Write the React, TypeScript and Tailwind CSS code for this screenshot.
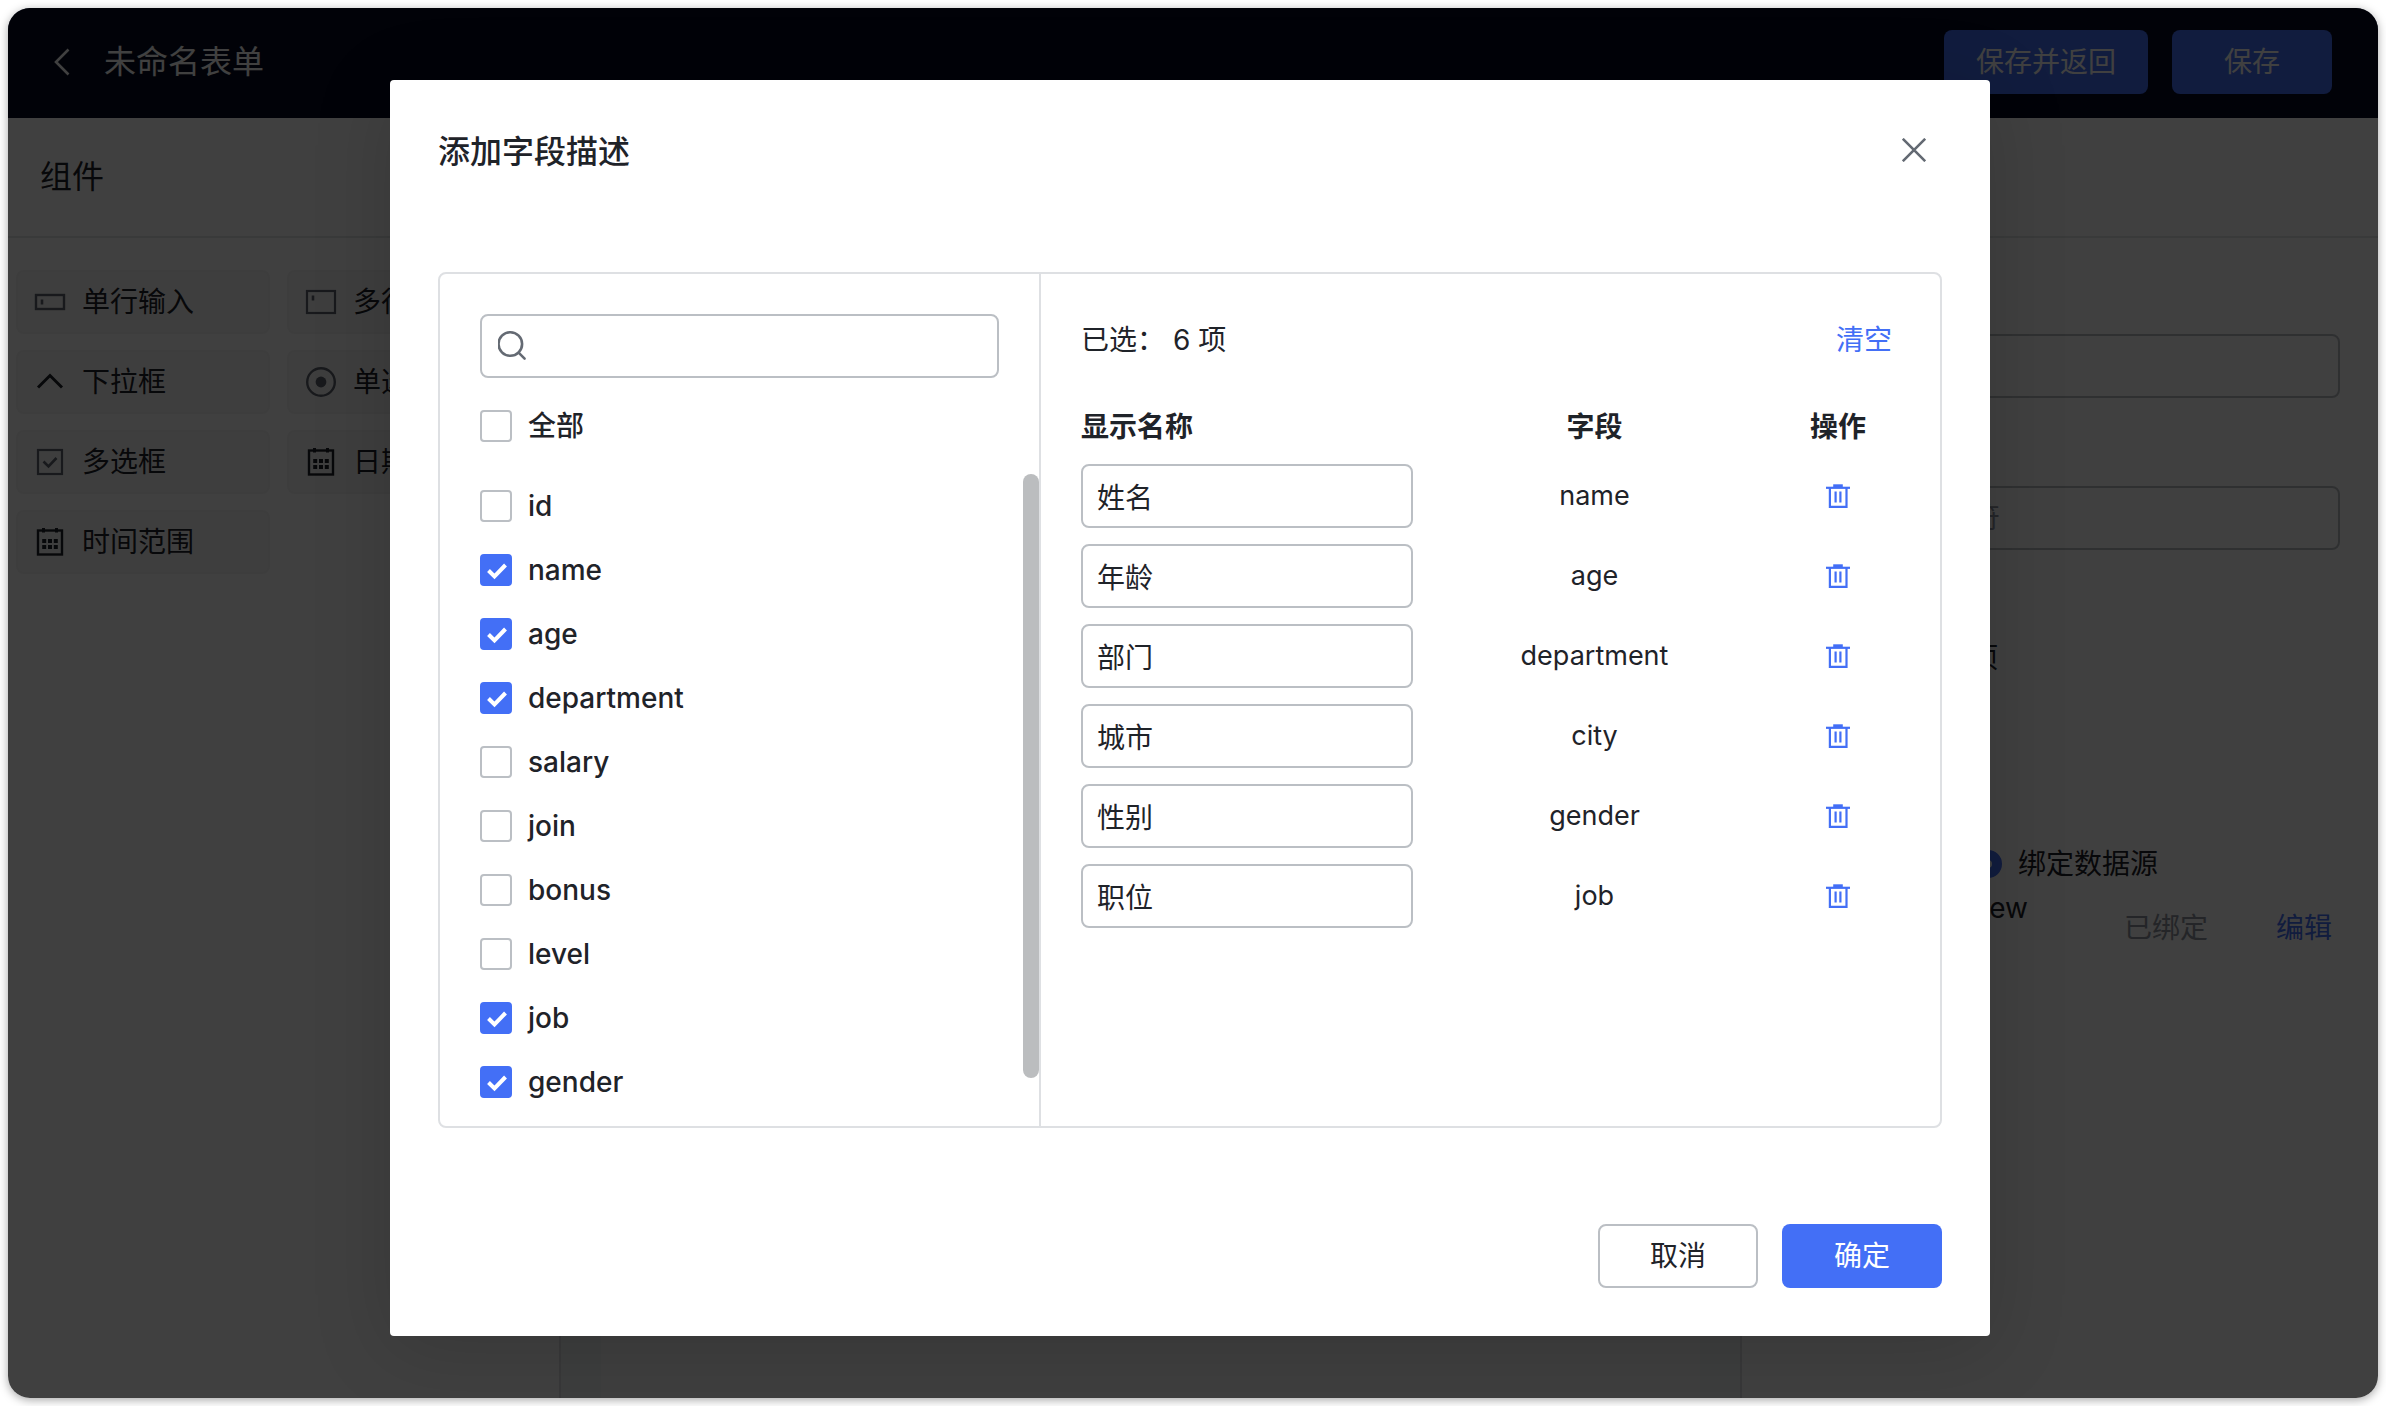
import { useState } from 'react'
import type { ReactNode } from 'react'

interface Field {
  key: string
  label: string
}

const allFields = ['id', 'name', 'age', 'department', 'salary', 'join', 'bonus', 'level', 'job', 'gender']

const initialSelected: Field[] = [
  { key: 'name', label: '姓名' },
  { key: 'age', label: '年龄' },
  { key: 'department', label: '部门' },
  { key: 'city', label: '城市' },
  { key: 'gender', label: '性别' },
  { key: 'job', label: '职位' },
]

function InputIcon() {
  return (
    <svg className="h-8 w-8 text-[#5f6570]" viewBox="0 0 32 32" fill="none" stroke="currentColor" strokeWidth={2.4}>
      <rect x="2" y="9" width="28" height="14" />
      <path d="M8 13.5v5" strokeWidth={2.6} />
    </svg>
  )
}

function TextareaIcon() {
  return (
    <svg className="h-8 w-8 text-[#5f6570]" viewBox="0 0 32 32" fill="none" stroke="currentColor" strokeWidth={2.2}>
      <rect x="2" y="5" width="28" height="22" />
      <path d="M8 9.5v5" strokeWidth={2.6} />
    </svg>
  )
}

function SelectIcon() {
  return (
    <svg className="h-8 w-8 text-[#1f2329]" viewBox="0 0 32 32" fill="none" stroke="currentColor" strokeWidth={3}>
      <path d="M4 21.5L16 9.5l12 12" />
    </svg>
  )
}

function RadioIcon() {
  return (
    <svg className="h-8 w-8 text-[#5f6570]" viewBox="0 0 32 32" fill="none" stroke="currentColor" strokeWidth={2.4}>
      <circle cx="16" cy="16" r="13.8" />
      <circle cx="16" cy="16" r="5.4" fill="currentColor" stroke="none" />
    </svg>
  )
}

function CheckboxIcon() {
  return (
    <svg className="h-8 w-8 text-[#5f6570]" viewBox="0 0 32 32" fill="none" stroke="currentColor" strokeWidth={2.2}>
      <rect x="4" y="4" width="24" height="24" />
      <path d="M9.5 15.5l5 5 8-8.5" strokeWidth={2.6} />
    </svg>
  )
}

function CalendarIcon() {
  return (
    <svg className="h-8 w-8 text-[#1f2329]" viewBox="0 0 32 32" fill="none" stroke="currentColor" strokeWidth={2.4}>
      <rect x="4" y="4.5" width="24" height="24" />
      <path d="M9.5 2v4.5M22.5 2v4.5" strokeWidth={3} />
      <path d="M8.2 15h4M14 15h4M19.8 15h4M8.2 21h4M14 21h4M19.8 21h4" strokeWidth={4} />
    </svg>
  )
}

function TrashIcon() {
  return (
    <svg className="h-6 w-6" viewBox="0 0 24 24" fill="none" stroke="currentColor" strokeWidth={2.2}>
      <path d="M0 3.8h24" />
      <path d="M7.2 1.8h9.6" strokeWidth={3} />
      <path d="M3.9 4v18.8h16.6V4" />
      <path d="M9.6 7.5v11M14.4 7.5v11" />
    </svg>
  )
}

const components: { name: string; icon: ReactNode }[] = [
  { name: '单行输入', icon: <InputIcon /> },
  { name: '多行输入', icon: <TextareaIcon /> },
  { name: '下拉框', icon: <SelectIcon /> },
  { name: '单选框', icon: <RadioIcon /> },
  { name: '多选框', icon: <CheckboxIcon /> },
  { name: '日期', icon: <CalendarIcon /> },
  { name: '时间范围', icon: <CalendarIcon /> },
]

function Checkbox({ label, checked, onChange }: { label: string; checked: boolean; onChange: () => void }) {
  return (
    <label className="flex h-16 cursor-pointer items-center gap-4 font-medium">
      <span className="relative h-8 w-8">
        <input
          type="checkbox"
          checked={checked}
          onChange={onChange}
          className="block h-8 w-8 appearance-none rounded-sm border-2 border-[#bbbfc4] bg-white checked:border-[#436ff6] checked:bg-[#436ff6]"
        />
        {checked && (
          <svg className="pointer-events-none absolute inset-0 h-8 w-8" viewBox="0 0 32 32" fill="none" stroke="#fff" strokeWidth={4}>
            <path d="M8.5 16.5l6 6L25.5 11" />
          </svg>
        )}
      </span>
      {label}
    </label>
  )
}

function TopBar() {
  return (
    <header className="flex h-[110px] items-center bg-[#050a20] pr-[46px] pb-0.5 pl-9 text-white">
      <button type="button" aria-label="返回" className="mr-7 h-8 w-8">
        <svg className="h-8 w-8" viewBox="0 0 32 32" fill="none" stroke="currentColor" strokeWidth={2.6}>
          <path d="M24.5 3.5L12 16l12.5 12.5" />
        </svg>
      </button>
      <h1 className="text-[32px]">未命名表单</h1>
      <div className="ml-auto flex gap-6">
        <button type="button" className="h-16 w-[204px] rounded-lg bg-[#436ff6]">保存并返回</button>
        <button type="button" className="h-16 w-40 rounded-lg bg-[#436ff6]">保存</button>
      </div>
    </header>
  )
}

function ComponentPanel() {
  return (
    <aside className="w-[553px] shrink-0 border-r-2 border-[#dee0e3] bg-white">
      <h2 className="flex h-[120px] items-center border-b-2 border-[#e4e5e7] px-8 text-[32px]">组件</h2>
      <ul className="grid grid-cols-[254px_254px] gap-x-[17px] gap-y-4 px-2 py-8">
        {components.map((item) => (
          <li key={item.name} className="flex h-16 items-center gap-4 rounded-lg border-2 border-[#f2f2f2] bg-[#f8f8f8] px-4">
            {item.icon}
            {item.name}
          </li>
        ))}
      </ul>
    </aside>
  )
}

function PropertyPanel() {
  return (
    <aside className="w-[638px] shrink-0 border-l-2 border-[#dee0e3] bg-white">
      <div className="h-[120px] border-b-2 border-[#e4e5e7]" />
      <div className="flex flex-col pt-24 pr-[38px] pl-10">
        <input aria-label="标题" className="h-16 rounded-lg border-2 border-[#bbbfc4] px-5" />
        <input
          aria-label="占位"
          placeholder="请输入占位字符"
          className="mt-[88px] h-16 rounded-lg border-2 border-[#bbbfc4] px-5 placeholder:text-[#8f959e]"
        />
        <label className="mt-[88px] flex h-10 items-center gap-4">
          <input type="checkbox" className="h-8 w-8 appearance-none rounded-sm border-2 border-[#bbbfc4]" />
          设置为必填项
        </label>
        <div className="mt-[166px] flex h-10 items-center">
          <label className="flex w-48 items-center gap-4">
            <input type="radio" name="source" className="h-7 w-7 appearance-none rounded-full border-2 border-[#bbbfc4]" />
            自定义
          </label>
          <label className="flex items-center gap-4">
            <input
              type="radio"
              name="source"
              defaultChecked
              className="h-7 w-7 appearance-none rounded-full border-[10px] border-[#436ff6] bg-white"
            />
            绑定数据源
          </label>
        </div>
        <div className="flex h-[88px] items-center">
          <span className="mb-10 w-[246px] text-right">data_view</span>
          <span className="ml-auto text-[#8f959e]">已绑定</span>
          <button type="button" className="mr-2 ml-[68px] text-[#436ff6]">编辑</button>
        </div>
      </div>
    </aside>
  )
}

function FieldDialog() {
  const [selected, setSelected] = useState<Field[]>(initialSelected)

  const isSelected = (key: string) => selected.some((f) => f.key === key)

  const remove = (key: string) => setSelected(selected.filter((f) => f.key !== key))

  const toggle = (key: string) => {
    if (isSelected(key)) {
      remove(key)
    } else {
      setSelected([...selected, { key, label: key }])
    }
  }

  const allChecked = allFields.every(isSelected)

  const toggleAll = () => {
    setSelected(allChecked ? [] : allFields.map((key) => selected.find((f) => f.key === key) ?? { key, label: key }))
  }

  const rename = (key: string, label: string) => {
    setSelected(selected.map((f) => (f.key === key ? { ...f, label } : f)))
  }

  return (
    <div role="dialog" aria-labelledby="dialog-title" className="w-[1600px] rounded bg-white p-12 shadow-[0_12px_80px_rgba(0,0,0,0.15)]">
      <div className="flex h-12 items-start justify-between pr-4">
        <h2 id="dialog-title" className="text-[32px] leading-12 font-medium">添加字段描述</h2>
        <button type="button" aria-label="关闭" className="flex h-11 items-center text-[#646a73]">
          <svg className="h-6 w-6" viewBox="0 0 24 24" fill="none" stroke="currentColor" strokeWidth={2.6}>
            <path d="M.8.8l22.4 22.4M23.2.8L.8 23.2" />
          </svg>
        </button>
      </div>

      <div className="my-24 flex rounded-lg border-2 border-[#dee0e3]">
        <section className="w-[601px] border-r-2 border-[#dee0e3] pt-10 pb-3">
          <div className="mx-10 flex h-16 items-center rounded-lg border-2 border-[#bbbfc4] px-4">
            <svg className="h-8 w-8 shrink-0 text-[#646a73]" viewBox="0 0 32 32" fill="none" stroke="currentColor" strokeWidth={2.6}>
              <circle cx="12.3" cy="14" r="11.8" />
              <path d="M20.6 22.6l6 6" strokeLinecap="round" />
            </svg>
            <input type="text" aria-label="搜索字段" className="h-full min-w-0 flex-1 px-2 outline-none" />
          </div>
          <div className="my-4 px-10">
            <Checkbox label="全部" checked={allChecked} onChange={toggleAll} />
          </div>
          <div className="flex justify-between">
            <ul className="pl-10">
              {allFields.map((key) => (
                <li key={key}>
                  <Checkbox label={key} checked={isSelected(key)} onChange={() => toggle(key)} />
                </li>
              ))}
            </ul>
            <div className="h-[604px] w-4 rounded-full bg-[#bbbdbf]" />
          </div>
        </section>

        <section className="flex-1 px-10 pt-10">
          <div className="flex h-[52px] items-center justify-between pr-2">
            <p className="whitespace-pre">已选：&nbsp;{selected.length} 项</p>
            <button type="button" onClick={() => setSelected([])} className="text-[#436ff6]">清空</button>
          </div>
          <table className="mt-8 w-full table-fixed">
            <thead>
              <tr className="h-[58px]">
                <th className="w-[332px] p-0 text-left font-bold">显示名称</th>
                <th className="p-0 font-bold">字段</th>
                <th className="w-[124px] p-0 font-bold">操作</th>
              </tr>
            </thead>
            <tbody>
              {selected.map((field) => (
                <tr key={field.key} className="h-20 text-center">
                  <td className="p-0">
                    <input
                      aria-label={field.key}
                      value={field.label}
                      onChange={(e) => rename(field.key, e.target.value)}
                      className="block h-16 w-full rounded-lg border-2 border-[#bbbfc4] px-3.5"
                    />
                  </td>
                  <td className="p-0 text-[27px]">{field.key}</td>
                  <td className="p-0">
                    <button
                      type="button"
                      aria-label={`删除 ${field.key}`}
                      onClick={() => remove(field.key)}
                      className="mx-auto block text-[#436ff6]"
                    >
                      <TrashIcon />
                    </button>
                  </td>
                </tr>
              ))}
            </tbody>
          </table>
        </section>
      </div>

      <div className="flex justify-end gap-6">
        <button type="button" className="h-16 w-40 rounded-lg border-2 border-[#bbbfc4]">取消</button>
        <button type="button" className="h-16 w-40 rounded-lg bg-[#436ff6] text-white">确定</button>
      </div>
    </div>
  )
}

export default function App() {
  return (
    <div className="flex min-h-screen bg-white p-2 font-['Inter','Noto_Sans_CJK_SC',sans-serif] text-[28px] leading-10 text-[#1f2329]">
      <div className="relative flex flex-1 flex-col overflow-hidden rounded-[22px] shadow-[0_2px_10px_rgba(0,0,0,0.35)]">
        <TopBar />
        <div className="flex flex-1">
          <ComponentPanel />
          <main className="flex flex-1 bg-[#f2f7f5] px-10">
            <div className="flex-1 bg-[#fcfcfc]" />
          </main>
          <PropertyPanel />
        </div>
        <div className="absolute inset-0 flex items-start justify-center bg-black/75 pt-[72px] pr-1.5">
          <FieldDialog />
        </div>
      </div>
    </div>
  )
}
